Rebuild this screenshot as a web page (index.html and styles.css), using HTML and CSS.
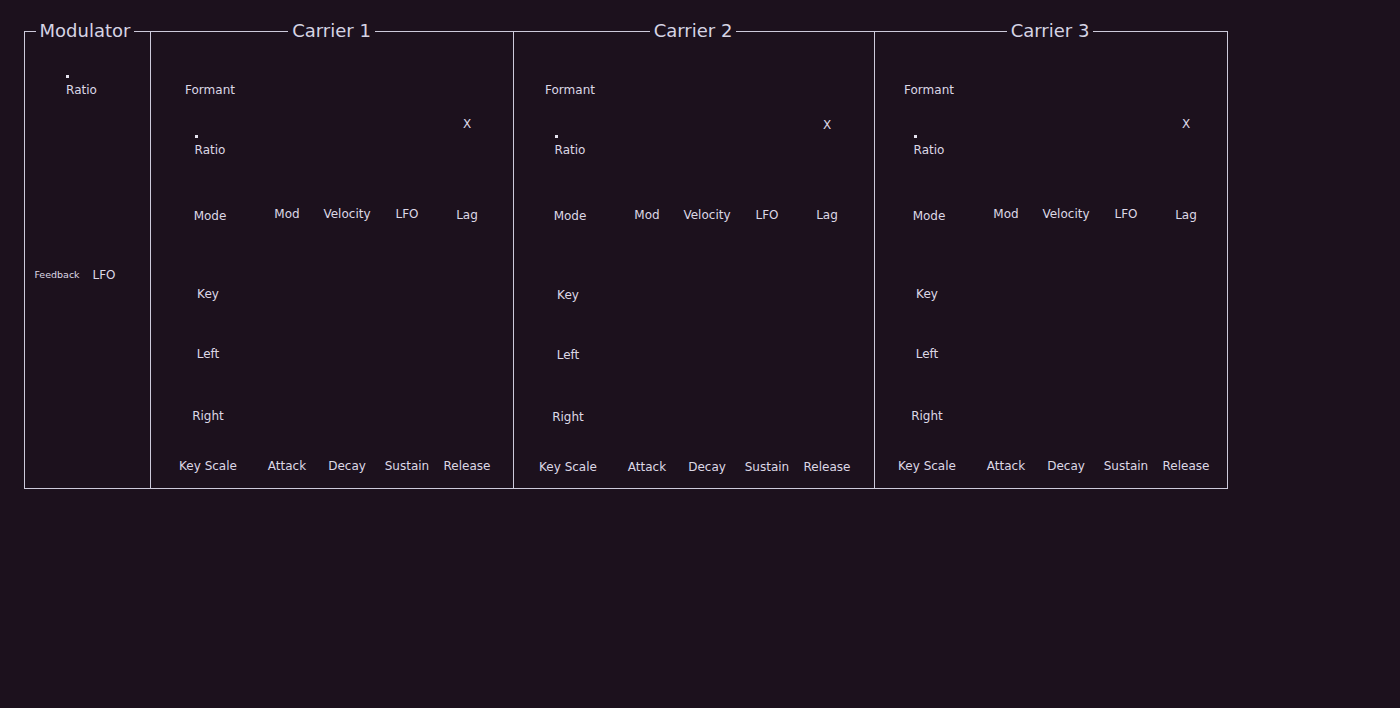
FILE: index.html
```html
<!DOCTYPE html>
<html>
<head>
<meta charset="utf-8">
<link rel="stylesheet" href="styles.css">
</head>
<body>
<div class="synth">
  <fieldset class="group modulator">
    <legend>Modulator</legend>
    <div class="mod-grid">
      <div class="ctl mratio"><span class="dot"></span><span class="lbl">Ratio</span></div>
      <div class="ctl mfb"><span class="lbl small">Feedback</span></div>
      <div class="ctl mlfo"><span class="lbl">LFO</span></div>
    </div>
  </fieldset>

  <fieldset class="group carrier car1">
    <legend>Carrier 1</legend>
    <div class="car-grid">
      <div class="ctl r1 k1 sh"><span class="lbl">Formant</span></div>
      <div class="ctl r2 k5"><span class="lbl">X</span></div>
      <div class="ctl r3 k1 sh"><span class="dot"></span><span class="lbl">Ratio</span></div>
      <div class="ctl r4 k1 sh down"><span class="lbl">Mode</span></div>
      <div class="ctl r4 k2"><span class="lbl">Mod</span></div>
      <div class="ctl r4 k3"><span class="lbl">Velocity</span></div>
      <div class="ctl r4 k4"><span class="lbl">LFO</span></div>
      <div class="ctl r4 k5 down1"><span class="lbl">Lag</span></div>
      <div class="ctl r5 k1"><span class="lbl">Key</span></div>
      <div class="ctl r6 k1"><span class="lbl">Left</span></div>
      <div class="ctl r7 k1"><span class="lbl">Right</span></div>
      <div class="ctl r8 k1"><span class="lbl">Key Scale</span></div>
      <div class="ctl r8 k2"><span class="lbl">Attack</span></div>
      <div class="ctl r8 k3"><span class="lbl">Decay</span></div>
      <div class="ctl r8 k4"><span class="lbl">Sustain</span></div>
      <div class="ctl r8 k5"><span class="lbl">Release</span></div>
    </div>
  </fieldset>

  <fieldset class="group carrier car2">
    <legend>Carrier 2</legend>
    <div class="car-grid">
      <div class="ctl r1 k1 sh"><span class="lbl">Formant</span></div>
      <div class="ctl r2 k5 down1"><span class="lbl">X</span></div>
      <div class="ctl r3 k1 sh"><span class="dot"></span><span class="lbl">Ratio</span></div>
      <div class="ctl r4 k1 sh down"><span class="lbl">Mode</span></div>
      <div class="ctl r4 k2 down1"><span class="lbl">Mod</span></div>
      <div class="ctl r4 k3 down1"><span class="lbl">Velocity</span></div>
      <div class="ctl r4 k4 down1"><span class="lbl">LFO</span></div>
      <div class="ctl r4 k5 down1"><span class="lbl">Lag</span></div>
      <div class="ctl r5 k1 down1"><span class="lbl">Key</span></div>
      <div class="ctl r6 k1 down1"><span class="lbl">Left</span></div>
      <div class="ctl r7 k1 down1"><span class="lbl">Right</span></div>
      <div class="ctl r8 k1 down1"><span class="lbl">Key Scale</span></div>
      <div class="ctl r8 k2 down1"><span class="lbl">Attack</span></div>
      <div class="ctl r8 k3 down1"><span class="lbl">Decay</span></div>
      <div class="ctl r8 k4 down1"><span class="lbl">Sustain</span></div>
      <div class="ctl r8 k5 down1"><span class="lbl">Release</span></div>
    </div>
  </fieldset>

  <fieldset class="group carrier car3">
    <legend>Carrier 3</legend>
    <div class="car-grid">
      <div class="ctl r1 k1 sh"><span class="lbl">Formant</span></div>
      <div class="ctl r2 k5"><span class="lbl">X</span></div>
      <div class="ctl r3 k1 sh"><span class="dot"></span><span class="lbl">Ratio</span></div>
      <div class="ctl r4 k1 sh down"><span class="lbl">Mode</span></div>
      <div class="ctl r4 k2"><span class="lbl">Mod</span></div>
      <div class="ctl r4 k3"><span class="lbl">Velocity</span></div>
      <div class="ctl r4 k4"><span class="lbl">LFO</span></div>
      <div class="ctl r4 k5 down1"><span class="lbl">Lag</span></div>
      <div class="ctl r5 k1"><span class="lbl">Key</span></div>
      <div class="ctl r6 k1"><span class="lbl">Left</span></div>
      <div class="ctl r7 k1"><span class="lbl">Right</span></div>
      <div class="ctl r8 k1"><span class="lbl">Key Scale</span></div>
      <div class="ctl r8 k2"><span class="lbl">Attack</span></div>
      <div class="ctl r8 k3"><span class="lbl">Decay</span></div>
      <div class="ctl r8 k4"><span class="lbl">Sustain</span></div>
      <div class="ctl r8 k5"><span class="lbl">Release</span></div>
    </div>
  </fieldset>
</div>
</body>
</html>
```

FILE: styles.css
```css
html, body {
  margin: 0;
  padding: 0;
  background: #1c111d;
  height: 100%;
}

body {
  font-family: "DejaVu Sans", "Liberation Sans", sans-serif;
  color: #dcd8e6;
}

.synth {
  display: flex;
  align-items: stretch;
  padding: 20px 0 0 24px;
}

.group {
  margin: 0;
  min-width: 0;
  box-sizing: border-box;
  border: 1px solid #cdcadb;
  padding-top: 0;
  padding-bottom: 15px;
}

.group legend {
  margin: 0 auto;
  padding: 0 4px 1px;
  font-size: 18px;
  line-height: 22px;
  color: #d6d4e4;
}

.modulator {
  width: 127px;
  padding-left: 8px;
  padding-right: 13px;
}

.carrier {
  border-left: 0;
}

.car1 { width: 363px; padding-left: 8px; padding-right: 9px; }
.car2 { width: 361px; padding-left: 5px; padding-right: 7px; }
.car3 { width: 353px; padding-left: 3px; padding-right: 5px; }

.mod-grid {
  display: grid;
  grid-template-columns: 48px 46px;
  grid-template-rows: 54px 185px;
  align-items: end;
  justify-items: center;
}

.mratio { grid-row: 1; grid-column: 1 / span 2; margin-left: 3px; }
.mfb { grid-row: 2; grid-column: 1; }
.mlfo { grid-row: 2; grid-column: 2; }

.car-grid {
  display: grid;
  grid-template-columns: 98px repeat(4, 60px);
  grid-template-rows: 54px 34px 26px 64px 80px 60px 62px 50px;
  align-items: end;
  justify-items: center;
}

.r1 { grid-row: 1; }
.r2 { grid-row: 2; }
.r3 { grid-row: 3; }
.r4 { grid-row: 4; }
.r5 { grid-row: 5; }
.r6 { grid-row: 6; }
.r7 { grid-row: 7; }
.r8 { grid-row: 8; }

.k1 { grid-column: 1; }
.k2 { grid-column: 2; }
.k3 { grid-column: 3; }
.k4 { grid-column: 4; }
.k5 { grid-column: 5; }

.ctl {
  display: flex;
  flex-direction: column;
  align-items: flex-start;
}

.sh { margin-left: 4px; }
.down { margin-bottom: -2px; }
.down1 { margin-bottom: -1px; }

.dot {
  width: 3px;
  height: 3px;
  background: #e4e2ee;
  margin-bottom: 5px;
}

.lbl {
  font-size: 12px;
  line-height: 14px;
  white-space: nowrap;
}

.lbl.small {
  font-size: 9.5px;
}
```
